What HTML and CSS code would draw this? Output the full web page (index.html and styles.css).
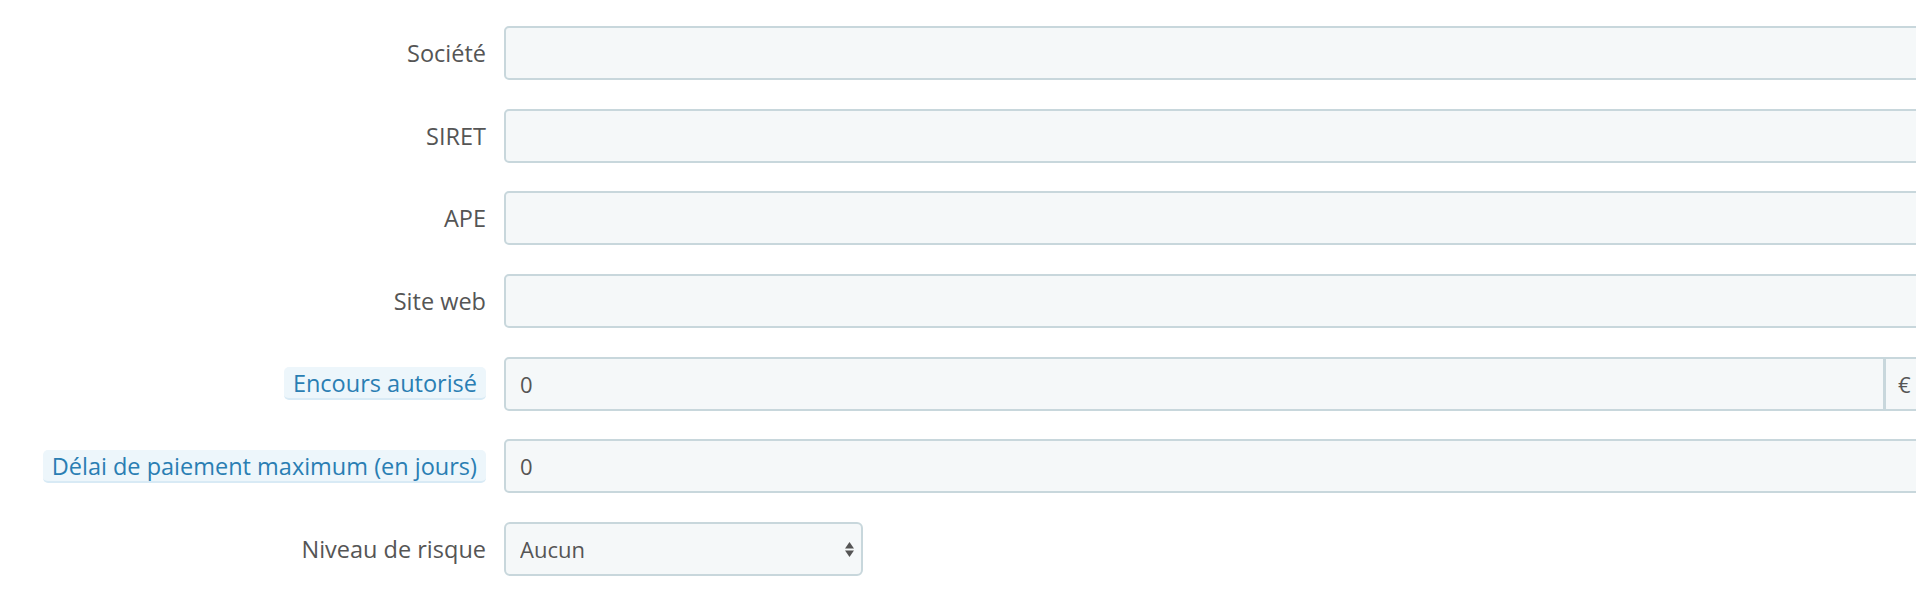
FILE: index.html
```html
<!DOCTYPE html>
<html lang="fr">
<head>
<meta charset="utf-8">
<title>Formulaire</title>
<link rel="stylesheet" href="styles.css">
</head>
<body>
<form class="form">
  <div class="row">
    <label class="label">Société</label>
    <div class="field"><input class="input" type="text" value=""></div>
  </div>
  <div class="row">
    <label class="label">SIRET</label>
    <div class="field"><input class="input" type="text" value=""></div>
  </div>
  <div class="row">
    <label class="label">APE</label>
    <div class="field"><input class="input" type="text" value=""></div>
  </div>
  <div class="row">
    <label class="label">Site web</label>
    <div class="field"><input class="input" type="text" value=""></div>
  </div>
  <div class="row">
    <label class="label"><span class="tip">Encours autorisé</span></label>
    <div class="field group">
      <input class="input input-grouped" type="text" value="0">
      <span class="addon">€</span>
    </div>
  </div>
  <div class="row">
    <label class="label"><span class="tip">Délai de paiement maximum (en jours)</span></label>
    <div class="field"><input class="input" type="text" value="0"></div>
  </div>
  <div class="row">
    <label class="label">Niveau de risque</label>
    <div class="field">
      <div class="select-wrap">
        <select class="select">
          <option>Aucun</option>
        </select>
        <svg class="arrows" width="9" height="15" viewBox="0 0 9 15" aria-hidden="true">
          <path d="M4.5 0 L9 6.5 L0 6.5 Z" fill="#555"/>
          <path d="M0 8.5 L9 8.5 L4.5 15 Z" fill="#555"/>
        </svg>
      </div>
    </div>
  </div>
</form>
</body>
</html>
```

FILE: styles.css
```css
html, body {
  margin: 0;
  padding: 0;
  background: #fff;
  overflow: hidden;
}

body {
  font-family: "Open Sans", "Liberation Sans", sans-serif;
  font-size: 23.5px;
  color: #555;
}

.form {
  width: 1932px;
  padding-top: 26px;
  display: flex;
  flex-direction: column;
  gap: 28.7px;
}

.row {
  display: grid;
  grid-template-columns: 486px 1fr;
  column-gap: 18px;
  align-items: center;
}

.label {
  text-align: right;
  color: #555;
  line-height: 30px;
}

.tip {
  display: inline-block;
  height: 33px;
  line-height: 32px;
  padding: 0 9px;
  box-sizing: border-box;
  background: #edf6fb;
  border-bottom: 2px solid #d8eaf5;
  border-radius: 5px;
  color: #2a7eb3;
}

.field {
  display: flex;
}

.input {
  flex: 1;
  box-sizing: border-box;
  height: 54px;
  padding: 0 14px;
  background: #f5f8f9;
  border: 2px solid #c8d7dc;
  border-radius: 5px;
  font-family: inherit;
  font-size: 22px;
  color: #555;
  outline: none;
}

.input-grouped {
  border-top-right-radius: 0;
  border-bottom-right-radius: 0;
}

.addon {
  box-sizing: border-box;
  height: 54px;
  width: 49px;
  display: flex;
  align-items: center;
  padding-left: 12px;
  background: #f5f8f9;
  border: 2px solid #c8d7dc;
  border-left: 3px solid #c8d7dc;
  margin-left: -2px;
  font-size: 22px;
  color: #555;
}

.select-wrap {
  position: relative;
  width: 359px;
}

.select {
  -webkit-appearance: none;
  appearance: none;
  width: 100%;
  box-sizing: border-box;
  height: 54px;
  padding: 0 30px 0 14px;
  background: #f5f8f9;
  border: 2px solid #c8d7dc;
  border-radius: 6px;
  font-family: inherit;
  font-size: 22px;
  color: #555;
  outline: none;
}

.arrows {
  position: absolute;
  right: 9px;
  top: 20px;
  pointer-events: none;
}
```
